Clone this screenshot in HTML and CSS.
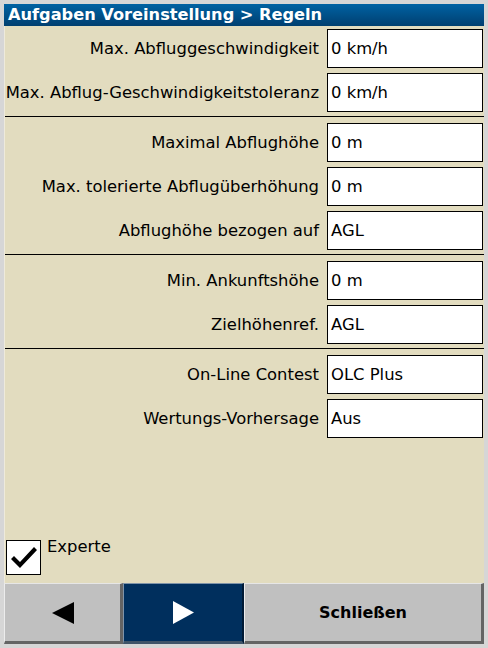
FILE: index.html
```html
<!DOCTYPE html>
<html>
<head>
<meta charset="utf-8">
<link rel="stylesheet" href="styles.css">
</head>
<body>
<div class="window">
  <div class="title">Aufgaben Voreinstellung &gt; Regeln</div>
  <div class="content">
    <div class="group first">
      <div class="row"><div class="label">Max. Abfluggeschwindigkeit</div><div class="box">0 km/h</div></div>
      <div class="row"><div class="label">Max. Abflug-Geschwindigkeitstoleranz</div><div class="box">0 km/h</div></div>
    </div>
    <div class="sep"></div>
    <div class="group">
      <div class="row"><div class="label">Maximal Abflughöhe</div><div class="box">0 m</div></div>
      <div class="row"><div class="label">Max. tolerierte Abflugüberhöhung</div><div class="box">0 m</div></div>
      <div class="row"><div class="label">Abflughöhe bezogen auf</div><div class="box">AGL</div></div>
    </div>
    <div class="sep"></div>
    <div class="group">
      <div class="row"><div class="label">Min. Ankunftshöhe</div><div class="box">0 m</div></div>
      <div class="row"><div class="label">Zielhöhenref.</div><div class="box">AGL</div></div>
    </div>
    <div class="sep"></div>
    <div class="group">
      <div class="row"><div class="label">On-Line Contest</div><div class="box">OLC Plus</div></div>
      <div class="row"><div class="label">Wertungs-Vorhersage</div><div class="box">Aus</div></div>
    </div>
    <div class="spacer"></div>
    <div class="check-row">
      <div class="checkbox">
        <svg width="33" height="33" viewBox="0 0 33 33"><polygon points="4,18 7,15 13,21 27,6 30,9 13,27" fill="#000"/></svg>
      </div>
      <div class="check-label">Experte</div>
    </div>
  </div>
  <div class="buttons">
    <div class="btn btn-prev">
      <svg width="22" height="22" viewBox="0 0 22 22"><polygon points="0,11 22,0 22,22" fill="#000"/></svg>
    </div>
    <div class="btn btn-next">
      <svg width="21" height="23" viewBox="0 0 21 23"><polygon points="0,0 21,11.5 0,23" fill="#fff"/></svg>
    </div>
    <div class="btn btn-close">Schließen</div>
  </div>
</div>
</body>
</html>
```

FILE: styles.css
```css
html, body {
  margin: 0;
  padding: 0;
}
body {
  background: #d6d6d6;
  padding: 4px;
  width: 480px;
  height: 640px;
  font-family: "DejaVu Sans", sans-serif;
  font-size: 16.4px;
  color: #000;
}
.window {
  width: 480px;
  height: 640px;
  display: flex;
  flex-direction: column;
}
.title {
  height: 22px;
  background: linear-gradient(#0062a3, #003f70);
  color: #fff;
  font-weight: bold;
  font-size: 16.2px;
  line-height: 22px;
  padding-left: 4px;
  white-space: nowrap;
}
.content {
  flex: 1;
  background: #e2dcbf;
  display: flex;
  flex-direction: column;
  border-left: 1px solid #eeeadb;
}
.group {
  display: flex;
  flex-direction: column;
  gap: 5px;
  padding: 6px 0 4px 0;
}
.group.first {
  padding-top: 3px;
}
.sep {
  height: 1px;
  background: #000;
}
.row {
  height: 39px;
  display: flex;
  align-items: center;
}
.label {
  flex: 1;
  text-align: right;
  padding-right: 8px;
  white-space: nowrap;
}
.box {
  width: 151px;
  height: 37px;
  background: #fff;
  border: 1px solid #000;
  padding-left: 3px;
  margin-right: 1px;
  display: flex;
  align-items: center;
  white-space: nowrap;
}
.spacer {
  flex: 1;
}
.check-row {
  display: flex;
  align-items: flex-start;
  margin: 0 0 8px 1px;
}
.checkbox {
  width: 33px;
  height: 33px;
  border: 1px solid #000;
  background: #fff;
}
.checkbox svg {
  display: block;
}
.check-label {
  margin-left: 6px;
  margin-top: -2px;
  line-height: 18px;
}
.buttons {
  height: 61px;
  display: flex;
}
.btn {
  box-sizing: border-box;
  height: 61px;
  display: flex;
  align-items: center;
  justify-content: center;
  background: #c0c0c0;
  border-top: 1px solid #e6e6e6;
  border-left: 1px solid #ececec;
  border-right: 3px solid #646464;
  border-bottom: 3px solid #646464;
}
.btn svg {
  display: block;
}
.btn-prev {
  width: 119px;
}
.btn-next {
  width: 121px;
  background: #002f5d;
  border-top: 1px solid #7f93a8;
  border-left: 1px solid #7f93a8;
  border-right: 2px solid #001a35;
  border-bottom: 3px solid #3f5468;
}
.btn-close {
  flex: 1;
  font-weight: bold;
  font-size: 16px;
}
```
